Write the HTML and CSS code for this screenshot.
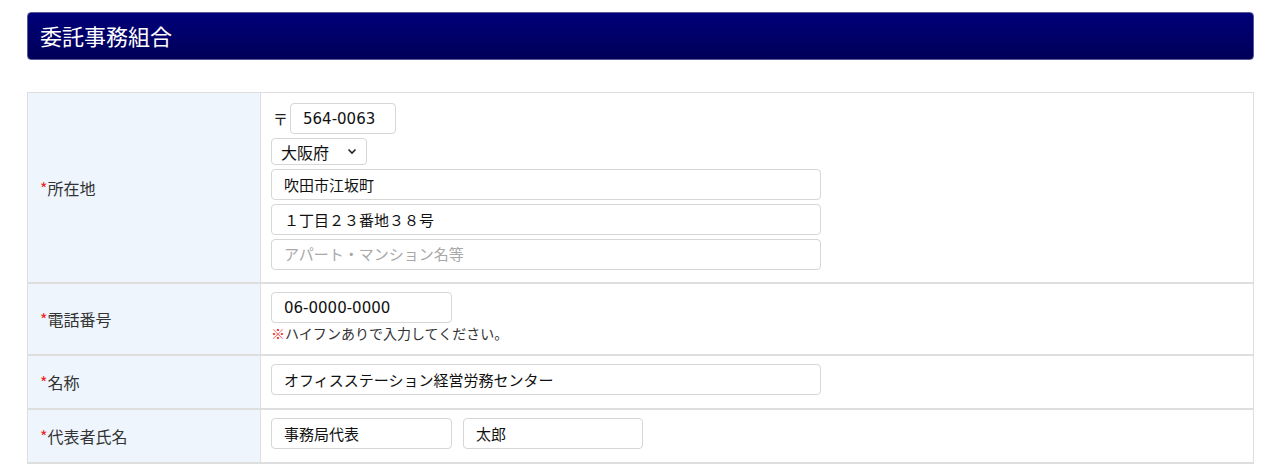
FILE: index.html
```html
<!DOCTYPE html>
<html lang="ja">
<head>
<meta charset="utf-8">
<link rel="stylesheet" href="styles.css">
</head>
<body>
<div class="page">
  <h2 class="title">委託事務組合</h2>
  <table class="form">
    <tr class="row-addr">
      <th><span class="req">*</span>所在地</th>
      <td>
        <div class="stack">
          <div class="zip"><span class="zip-mark">〒</span><input class="in in-zip" value="564-0063"></div>
          <div class="sel">大阪府<svg width="10" height="7" viewBox="0 0 10 7"><path d="M1.5 1.5 L5 5 L8.5 1.5" fill="none" stroke="#222" stroke-width="1.6"/></svg></div>
          <input class="in in-wide" value="吹田市江坂町">
          <input class="in in-wide" value="１丁目２３番地３８号">
          <input class="in in-wide" placeholder="アパート・マンション名等">
        </div>
      </td>
    </tr>
    <tr class="row-tel">
      <th><span class="req">*</span>電話番号</th>
      <td>
        <input class="in in-mid" value="06-0000-0000">
        <div class="note"><span class="kome">※</span>ハイフンありで入力してください。</div>
      </td>
    </tr>
    <tr>
      <th><span class="req">*</span>名称</th>
      <td><input class="in in-wide" value="オフィスステーション経営労務センター"></td>
    </tr>
    <tr>
      <th><span class="req">*</span>代表者氏名</th>
      <td><div class="names"><input class="in in-mid" value="事務局代表"><input class="in in-mid2" value="太郎"></div></td>
    </tr>
  </table>
</div>
</body>
</html>
```

FILE: styles.css
```css
* { box-sizing: border-box; }
html, body { margin: 0; padding: 0; background: #fff; }
body {
  font-family: "DejaVu Sans", "Noto Sans CJK JP", sans-serif;
  color: #333;
  font-size: 15px;
}
.page { padding: 12px 26px 0 27px; }
.title {
  margin: 0;
  height: 48px;
  border-radius: 4px;
  background: linear-gradient(#00007a, #000058);
  color: #fff;
  font-family: "Noto Sans CJK JP", sans-serif;
  font-size: 22px;
  font-weight: normal;
  line-height: 45px;
  padding-left: 12px;
  border: 1px solid #5a5a9a;
}
.form {
  margin-top: 32px;
  width: 100%;
  border-collapse: collapse;
  border: 1px solid #dcdcdc;
}
.form th, .form td {
  border-style: solid;
  border-color: #dedede;
  border-width: 2px 1px;
}
.form tr:first-child th, .form tr:first-child td { border-top-width: 1px; }
.form tr:last-child th, .form tr:last-child td { border-bottom-width: 2px; }
.form th {
  width: 233px;
  background: #eef5fd;
  text-align: left;
  font-weight: normal;
  padding: 0 0 0 12px;
  color: #333;
  font-family: "Noto Sans CJK JP", sans-serif;
  font-size: 16px;
}
.form td { padding: 8px 10px 13px 10px; height: 52px; }
.form .row-addr td { padding-top: 10px; padding-bottom: 12px; }
.req { color: #ee2222; }
.stack { display: flex; flex-direction: column; gap: 4px; align-items: flex-start; }
.zip { display: flex; align-items: center; }
.zip-mark { font-size: 15px; color: #222; width: 17px; margin-left: 2px; font-family: "Noto Sans CJK JP", sans-serif; }
.in {
  font-family: "DejaVu Sans", "Noto Sans CJK JP", sans-serif;
  font-size: 15px;
  color: #111;
  height: 31px;
  border: 1px solid #d6d6d6;
  border-radius: 4px;
  padding: 0 12px;
  background: #fff;
  outline: none;
  display: block;
}
.in::placeholder { color: #a8a8a8; }
.in-zip { width: 106px; }
.in-wide { width: 550px; }
.in-mid { width: 181px; }
.in-mid2 { width: 180px; }
.sel {
  width: 96px;
  height: 27px;
  border: 1px solid #d6d6d6;
  border-radius: 4px;
  display: flex;
  align-items: center;
  justify-content: space-between;
  padding: 0 9px 0 9px;
  color: #111;
  font-family: "Noto Sans CJK JP", sans-serif;
  font-size: 16px;
}
.note { margin-top: 2px; font-size: 14px; color: #333; line-height: 16px; font-family: "Noto Sans CJK JP", sans-serif; }
.kome { color: #ee2222; font-weight: bold; }
.names { display: flex; gap: 11px; }
```
